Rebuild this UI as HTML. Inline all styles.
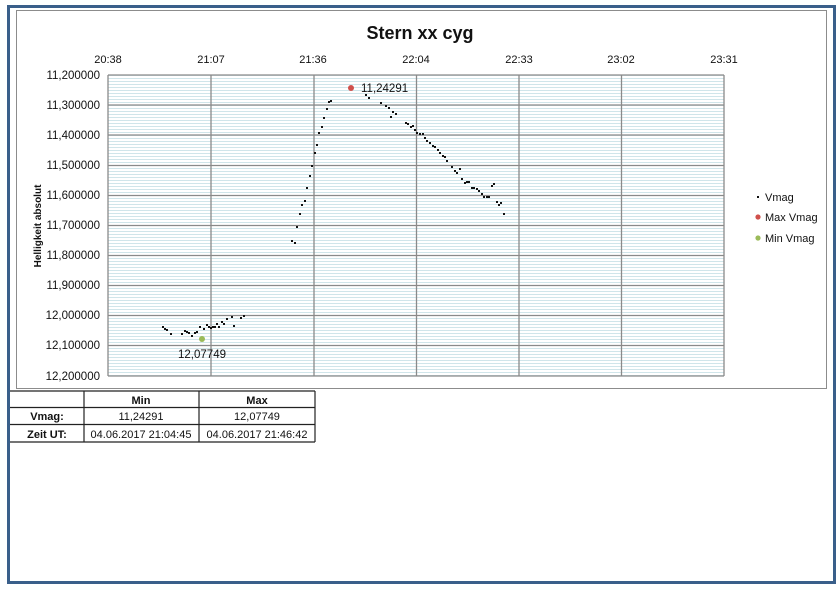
<!DOCTYPE html>
<html><head><meta charset="utf-8"><style>
html,body{margin:0;padding:0;background:#fff;}
svg{display:block;font-family:"Liberation Sans",Arial,sans-serif;}
</style></head><body>
<svg width="840" height="590" viewBox="0 0 840 590" xmlns="http://www.w3.org/2000/svg">
<defs>
<pattern id="minor" x="108" y="75" width="620" height="3" patternUnits="userSpaceOnUse">
<line x1="0" y1="0.5" x2="620" y2="0.5" stroke="#d0e5ea" stroke-width="1"/>
</pattern>
</defs>
<rect x="0" y="0" width="840" height="590" fill="#fff"/>
<rect x="8.5" y="6.5" width="826" height="576" fill="#fff" stroke="#3a5f8a" stroke-width="3"/>
<rect x="16.5" y="10.5" width="810" height="378" fill="#fff" stroke="#8c8c8c" stroke-width="1"/>
<text x="420" y="39" font-size="18" font-weight="bold" text-anchor="middle" fill="#111">Stern xx cyg</text>
<g font-size="11" fill="#111" text-anchor="middle">
<text x="108" y="63">20:38</text><text x="211" y="63">21:07</text><text x="313" y="63">21:36</text><text x="416" y="63">22:04</text><text x="519" y="63">22:33</text><text x="621" y="63">23:02</text><text x="724" y="63">23:31</text>
</g>
<rect x="108" y="75" width="616" height="301" fill="url(#minor)"/>
<g stroke="#8a8a8a" stroke-width="1.3">
<line x1="108" y1="75" x2="724" y2="75"/><line x1="108" y1="105" x2="724" y2="105"/><line x1="108" y1="135" x2="724" y2="135"/><line x1="108" y1="165.5" x2="724" y2="165.5"/><line x1="108" y1="195.5" x2="724" y2="195.5"/><line x1="108" y1="225.5" x2="724" y2="225.5"/><line x1="108" y1="255.5" x2="724" y2="255.5"/><line x1="108" y1="285.5" x2="724" y2="285.5"/><line x1="108" y1="315.5" x2="724" y2="315.5"/><line x1="108" y1="345.5" x2="724" y2="345.5"/><line x1="108" y1="376" x2="724" y2="376"/>
<line x1="108" y1="75" x2="108" y2="376"/><line x1="211" y1="75" x2="211" y2="376"/><line x1="314" y1="75" x2="314" y2="376"/><line x1="416.5" y1="75" x2="416.5" y2="376"/><line x1="519" y1="75" x2="519" y2="376"/><line x1="621.5" y1="75" x2="621.5" y2="376"/><line x1="724" y1="75" x2="724" y2="376"/>
</g>
<g font-size="11.5" fill="#111" text-anchor="end">
<text x="100" y="79">11,200000</text><text x="100" y="109">11,300000</text><text x="100" y="139">11,400000</text><text x="100" y="169">11,500000</text><text x="100" y="199">11,600000</text><text x="100" y="229">11,700000</text><text x="100" y="259">11,800000</text><text x="100" y="289">11,900000</text><text x="100" y="319">12,000000</text><text x="100" y="349">12,100000</text><text x="100" y="380">12,200000</text>
</g>
<text transform="translate(41,226) rotate(-90)" font-size="10" font-weight="bold" text-anchor="middle" fill="#111">Helligkeit absolut</text>
<g fill="#111">
<rect x="162" y="326" width="2" height="2"/><rect x="164" y="328" width="2" height="2"/><rect x="166" y="329" width="2" height="2"/><rect x="170" y="333" width="2" height="2"/><rect x="181" y="333" width="2" height="2"/><rect x="184" y="330" width="2" height="2"/><rect x="186" y="331" width="2" height="2"/><rect x="188" y="332" width="2" height="2"/><rect x="191" y="335" width="2" height="2"/><rect x="194" y="332" width="2" height="2"/><rect x="196" y="331" width="2" height="2"/><rect x="199" y="326" width="2" height="2"/><rect x="203" y="328" width="2" height="2"/><rect x="206" y="324" width="2" height="2"/><rect x="208" y="326" width="2" height="2"/><rect x="210" y="327" width="2" height="2"/><rect x="212" y="326" width="2" height="2"/><rect x="214" y="326" width="2" height="2"/><rect x="216" y="323" width="2" height="2"/><rect x="218" y="326" width="2" height="2"/><rect x="221" y="321" width="2" height="2"/><rect x="223" y="323" width="2" height="2"/><rect x="226" y="318" width="2" height="2"/><rect x="231" y="316" width="2" height="2"/><rect x="233" y="325" width="2" height="2"/><rect x="240" y="317" width="2" height="2"/><rect x="243" y="315" width="2" height="2"/>
<rect x="291" y="240" width="2" height="2"/><rect x="294" y="242" width="2" height="2"/><rect x="296" y="226" width="2" height="2"/><rect x="299" y="213" width="2" height="2"/><rect x="301" y="204" width="2" height="2"/><rect x="304" y="200" width="2" height="2"/><rect x="306" y="187" width="2" height="2"/><rect x="309" y="175" width="2" height="2"/><rect x="311" y="165" width="2" height="2"/><rect x="314" y="152" width="2" height="2"/><rect x="316" y="144" width="2" height="2"/><rect x="318" y="132" width="2" height="2"/><rect x="321" y="126" width="2" height="2"/><rect x="323" y="117" width="2" height="2"/><rect x="326" y="108" width="2" height="2"/><rect x="328" y="101" width="2" height="2"/><rect x="330" y="100" width="2" height="2"/>
<rect x="365" y="94" width="2" height="2"/><rect x="368" y="97" width="2" height="2"/><rect x="380" y="102" width="2" height="2"/><rect x="385" y="105" width="2" height="2"/><rect x="388" y="107" width="2" height="2"/><rect x="390" y="116" width="2" height="2"/><rect x="392" y="111" width="2" height="2"/><rect x="395" y="113" width="2" height="2"/><rect x="405" y="122" width="2" height="2"/><rect x="407" y="123" width="2" height="2"/><rect x="410" y="126" width="2" height="2"/><rect x="412" y="125" width="2" height="2"/><rect x="414" y="129" width="2" height="2"/><rect x="416" y="132" width="2" height="2"/><rect x="419" y="133" width="2" height="2"/><rect x="422" y="133" width="2" height="2"/><rect x="424" y="137" width="2" height="2"/><rect x="426" y="140" width="2" height="2"/><rect x="429" y="142" width="2" height="2"/><rect x="432" y="145" width="2" height="2"/><rect x="434" y="146" width="2" height="2"/><rect x="437" y="149" width="2" height="2"/><rect x="439" y="152" width="2" height="2"/><rect x="442" y="155" width="2" height="2"/><rect x="444" y="156" width="2" height="2"/><rect x="446" y="160" width="2" height="2"/><rect x="451" y="166" width="2" height="2"/><rect x="454" y="170" width="2" height="2"/><rect x="456" y="172" width="2" height="2"/><rect x="459" y="168" width="2" height="2"/><rect x="461" y="178" width="2" height="2"/><rect x="464" y="182" width="2" height="2"/><rect x="466" y="181" width="2" height="2"/><rect x="468" y="181" width="2" height="2"/><rect x="471" y="187" width="2" height="2"/><rect x="473" y="187" width="2" height="2"/><rect x="476" y="188" width="2" height="2"/><rect x="478" y="190" width="2" height="2"/><rect x="481" y="193" width="2" height="2"/><rect x="483" y="196" width="2" height="2"/><rect x="486" y="196" width="2" height="2"/><rect x="488" y="196" width="2" height="2"/><rect x="491" y="185" width="2" height="2"/><rect x="493" y="183" width="2" height="2"/><rect x="496" y="201" width="2" height="2"/><rect x="498" y="204" width="2" height="2"/><rect x="500" y="202" width="2" height="2"/><rect x="503" y="213" width="2" height="2"/>
</g>
<circle cx="351" cy="88" r="3" fill="#d0504c"/>
<circle cx="202" cy="339" r="3" fill="#9bbb59"/>
<text x="361" y="92" font-size="11.5" fill="#111">11,24291</text>
<text x="202" y="358" font-size="11.5" fill="#111" text-anchor="middle">12,07749</text>
<g font-size="11" fill="#111">
<rect x="757" y="196" width="2" height="2" fill="#111"/><text x="765" y="201">Vmag</text>
<circle cx="758" cy="217" r="2.6" fill="#d0504c"/><text x="765" y="221">Max Vmag</text>
<circle cx="758" cy="238" r="2.6" fill="#9bbb59"/><text x="765" y="242">Min Vmag</text>
</g>
<g stroke="#222" stroke-width="1.2" fill="none">
<line x1="10" y1="391" x2="315" y2="391"/><line x1="10" y1="407.5" x2="315" y2="407.5"/><line x1="10" y1="424.5" x2="315" y2="424.5"/><line x1="10" y1="442" x2="315" y2="442"/>
<line x1="84" y1="391" x2="84" y2="442"/><line x1="199" y1="391" x2="199" y2="442"/><line x1="315" y1="391" x2="315" y2="442"/>
</g>
<g font-size="11" fill="#111" text-anchor="middle">
<text x="141" y="404" font-weight="bold">Min</text><text x="257" y="404" font-weight="bold">Max</text>
<text x="47" y="420" font-weight="bold">Vmag:</text><text x="141" y="420">11,24291</text><text x="257" y="420">12,07749</text>
<text x="47" y="438" font-weight="bold">Zeit UT:</text><text x="141" y="438">04.06.2017 21:04:45</text><text x="257" y="438">04.06.2017 21:46:42</text>
</g>
</svg>
</body></html>
